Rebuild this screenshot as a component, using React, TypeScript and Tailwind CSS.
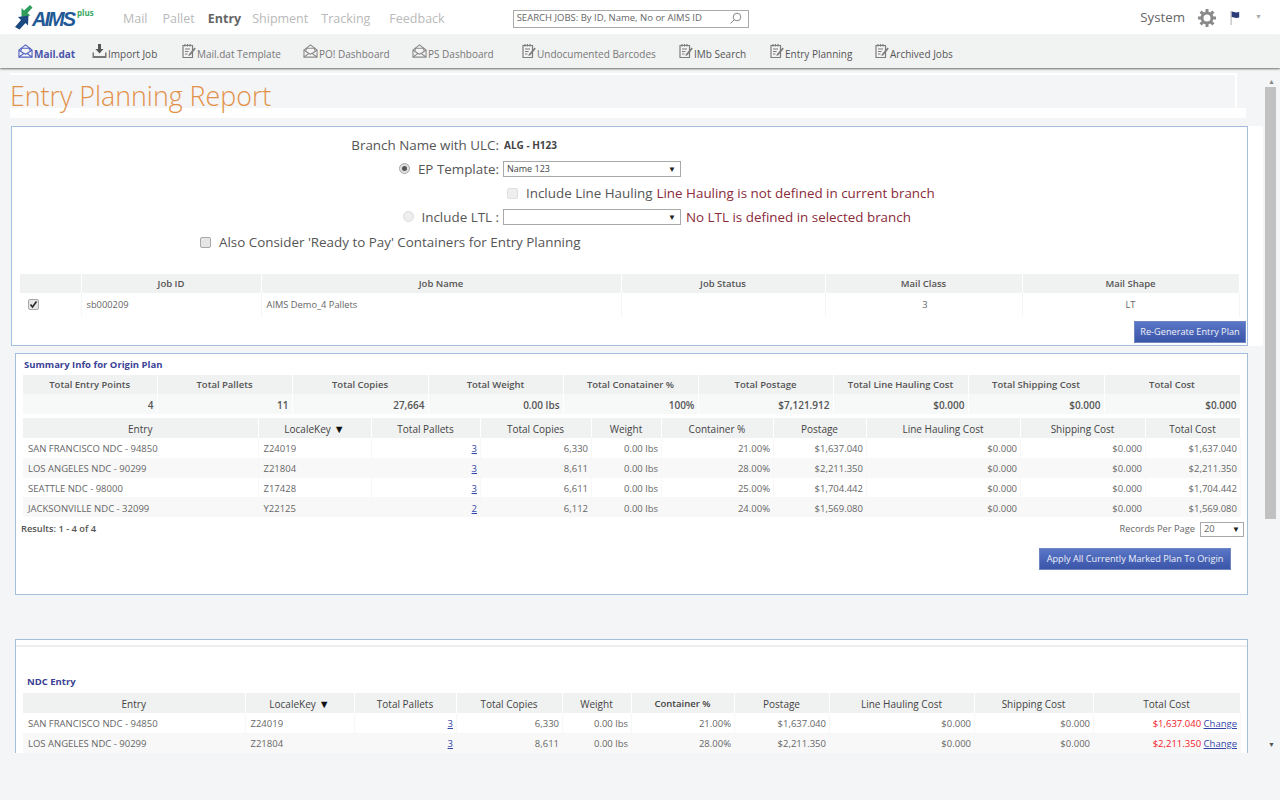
import React from "react";

const sans = "[font-family:'Open_Sans','Liberation_Sans',sans-serif]";

function Envelope({ c = "#8a8a8a" }: { c?: string }) {
  return (
    <svg width="15" height="14" viewBox="0 0 16 15" fill="none" stroke={c} strokeWidth="1.2">
      <path d="M1 6.500 8 1l7 5.500V14H1z" fill="#f6f6f6" />
      <path d="M3.500 7V4.500h9V7M1 6.500l5.500 4M15 6.500l-5.500 4M1 14l5.500-4 1.500 1 1.500-1 5.500 4" />
    </svg>
  );
}
function Note() {
  return (
    <svg width="15" height="16" viewBox="0 0 15 16" fill="none" stroke="#7d7d7d" strokeWidth="1.2">
      <path d="M2 2.500h9.500V14.500H2z" fill="#f3f3f3" />
      <path d="M4 1v2.500M6.500 1v2.500M9 1v2.500M4 6h5M4 8.500h3.500M4 11h2.500" />
      <path d="M13.500 4.500 8 11l-.7 2 2-.8 5.500-6.400z" fill="#7d7d7d" stroke="none" />
    </svg>
  );
}
function Download() {
  return (
    <svg width="15" height="16" viewBox="0 0 15 16" fill="#555">
      <path d="M6 1h3v5h2.500L7.500 10.500 3.500 6H6z" />
      <path d="M.500 9.500H2V13h11V9.500h1.500V15H.500z" fill="#777" />
    </svg>
  );
}

const tabs: { l: string; ml: string; w: string; icon: React.ReactNode; cls: string }[] = [
  { l: "Mail.dat", ml: "ml-[18px]", w: "w-[42px]", icon: <Envelope c="#4f5fc0" />, cls: "font-bold text-[#4a55ad]" },
  { l: "Import Job", ml: "ml-[16px]", w: "w-[51px]", icon: <Download />, cls: "text-[#555]" },
  { l: "Mail.dat Template", ml: "ml-[22px]", w: "w-[84px]", icon: <Note />, cls: "text-[#777]" },
  { l: "PO! Dashboard", ml: "ml-[22px]", w: "w-[71px]", icon: <Envelope />, cls: "text-[#777]" },
  { l: "PS Dashboard", ml: "ml-[22px]", w: "w-[66px]", icon: <Envelope />, cls: "text-[#777]" },
  { l: "Undocumented Barcodes", ml: "ml-[27px]", w: "w-[120px]", icon: <Note />, cls: "text-[#777]" },
  { l: "IMb Search", ml: "ml-[21px]", w: "w-[53px]", icon: <Note />, cls: "text-[#555]" },
  { l: "Entry Planning", ml: "ml-[22px]", w: "w-[68px]", icon: <Note />, cls: "text-[#555]" },
  { l: "Archived Jobs", ml: "ml-[21px]", w: "w-[65px]", icon: <Note />, cls: "text-[#555]" },
];

function Check({ checked = false, light = false }: { checked?: boolean; light?: boolean }) {
  return (
    <span className={`flex h-[11px] w-[11px] shrink-0 items-center justify-center rounded-[2px] border ${light ? "border-[#e0e0e0] bg-[#eeeeee]" : "border-[#a8a8a8] bg-[#e6e6e6]"}`}>
      {checked && (
        <svg width="9" height="9" viewBox="0 0 9 9"><path d="M1.500 4.500 3.500 7 7.500 1.500" fill="none" stroke="#222" strokeWidth="1.500" /></svg>
      )}
    </span>
  );
}
function Radio({ on = false }: { on?: boolean }) {
  return (
    <span className={`flex h-[11px] w-[11px] shrink-0 items-center justify-center rounded-full border ${on ? "border-[#a8a8a8] bg-[#e0e0e0]" : "border-[#dcdcdc] bg-[#eeeeee]"}`}>
      {on && <span className="h-[5px] w-[5px] rounded-full bg-[#555]" />}
    </span>
  );
}
function Select({ text = "" }: { text?: string }) {
  return (
    <div className="flex h-[16px] w-[178px] items-center justify-between border border-[#a9a9a9] bg-white pl-[3px] pr-[4px] text-[9px] text-[#444]">
      <span>{text}</span>
      <span className="text-[8px] text-[#222]">▼</span>
    </div>
  );
}
function Btn({ children, w }: { children: React.ReactNode; w: string }) {
  return (
    <button className={`h-[22px] ${w} whitespace-nowrap border border-[#6f86c4] bg-gradient-to-b from-[#5a76c6] to-[#3b55a8] text-[9.200px] text-[#eef1fb]`}>
      {children}
    </button>
  );
}

const hd = "bg-[#f0f1f1] border-r border-white text-center align-middle p-0";

const jobCols = ["w-[61px]", "w-[180px]", "w-[360px]", "w-[204px]", "w-[197px]", "w-[217px]"];
const sumCols = ["w-[134px]", "w-[135px]", "w-[136px]", "w-[135px]", "w-[135px]", "w-[135px]", "w-[135px]", "w-[136px]", "w-[136px]"];
const originCols = ["w-[235px]", "w-[113px]", "w-[109px]", "w-[111px]", "w-[70px]", "w-[112px]", "w-[93px]", "w-[154px]", "w-[125px]", "w-[95px]"];
const ndcCols = ["w-[222px]", "w-[109px]", "w-[102px]", "w-[106px]", "w-[69px]", "w-[103px]", "w-[95px]", "w-[145px]", "w-[119px]", "w-[147px]"];

function Cols({ c }: { c: string[] }) {
  return (
    <colgroup>
      {c.map((x, i) => (
        <col key={i} className={x} />
      ))}
    </colgroup>
  );
}

const origin = [
  ["SAN FRANCISCO NDC - 94850", "Z24019", "3", "6,330", "0.00 lbs", "21.00%", "$1,637.040", "$0.000", "$0.000", "$1,637.040"],
  ["LOS ANGELES NDC - 90299", "Z21804", "3", "8,611", "0.00 lbs", "28.00%", "$2,211.350", "$0.000", "$0.000", "$2,211.350"],
  ["SEATTLE NDC - 98000", "Z17428", "3", "6,611", "0.00 lbs", "25.00%", "$1,704.442", "$0.000", "$0.000", "$1,704.442"],
  ["JACKSONVILLE NDC - 32099", "Y22125", "2", "6,112", "0.00 lbs", "24.00%", "$1,569.080", "$0.000", "$0.000", "$1,569.080"],
];
const heads = ["Entry", "LocaleKey", "Total Pallets", "Total Copies", "Weight", "Container %", "Postage", "Line Hauling Cost", "Shipping Cost", "Total Cost"];

function DataTable({ cols, rows, ndc = false, rowH }: { cols: string[]; rows: string[][]; ndc?: boolean; rowH: string }) {
  return (
    <table className="w-[1217px] table-fixed border-collapse">
      <Cols c={cols} />
      <thead>
        <tr className="h-[20px] text-[10px] leading-[14px] text-[#444]">
          {heads.map((h, i) => (
            <th key={h} className={`${hd} pt-[1px] ${ndc && i === 5 ? "font-semibold text-[9.500px]" : "font-normal"}`}>
              {h}
              {i === 1 && <span className="ml-[3px] text-[11px] leading-[12px] text-[#111]">▼</span>}
            </th>
          ))}
        </tr>
      </thead>
      <tbody>
        {rows.map((r, ri) => (
          <tr key={ri} className={`${rowH} text-[9.500px] leading-[14px] text-[#666] ${ri % 2 ? "bg-[#f8f8f8]" : "bg-white"}`}>
            {r.map((v, i) => (
              <td key={i} className={`border-r border-[#f7f7f7] p-0 ${ndc ? "pt-[2px]" : "pt-[3px]"} ${i < 2 ? "pl-[5px] text-left" : "pr-[2.500px] text-right"}`}>
                {i === 2 ? (
                  <a className="text-[#3346a8] underline">{v}</a>
                ) : i === 9 && ndc ? (
                  <>
                    <span className="text-[#f0202a]">{v}</span> <a className="text-[#3346a8] underline">Change</a>
                  </>
                ) : (
                  v
                )}
              </td>
            ))}
          </tr>
        ))}
      </tbody>
    </table>
  );
}

export default function App() {
  return (
    <div className={`flex h-[800px] w-[1280px] flex-col overflow-hidden bg-[#f4f5f7] ${sans}`}>
      {/* top bar */}
      <header className="flex h-[35px] shrink-0 items-center bg-white">
        <div className="ml-[14px] flex w-[109px] items-start">
          <svg width="19" height="27" viewBox="0 0 19 27" className="-mr-[1px] mt-[-1px]">
            <path d="M16 1l2.500 2.500-5 5.500 3 2.500-9 1.500 0-9 2.500 2.500z" fill="#2e9c5a" />
            <path d="M1 23l6-7-3-3 10.500-1.500-.5 10-2.500-2.500-6 6.500z" fill="#1c4a80" />
          </svg>
          <span className="mt-[2px] text-[20px] font-bold italic leading-[24px] tracking-[-2px] text-[#1f5a96] [font-family:'Liberation_Sans',sans-serif]">AIMS</span>
          <span className="ml-[3px] mt-[1px] text-[8px] font-bold leading-[14px] text-[#39a85f]">plus</span>
        </div>
        <nav className="mt-[4px] flex text-[12.500px] text-[#b9b9b9]">
          <span>Mail</span>
          <span className="ml-[15px]">Pallet</span>
          <span className="ml-[13px] font-bold text-[#666]">Entry</span>
          <span className="ml-[11px]">Shipment</span>
          <span className="ml-[13px]">Tracking</span>
          <span className="ml-[19px]">Feedback</span>
        </nav>
        <div className="ml-[68px] mt-[2px] flex h-[18px] w-[236px] items-center justify-between border border-[#aaaaaa] pl-[3px] pr-[6px] text-[9.500px] text-[#666]">
          <span>SEARCH JOBS: By ID, Name, No or AIMS ID</span>
          <svg width="13" height="13" viewBox="0 0 13 13" fill="none" stroke="#888" strokeWidth="1">
            <circle cx="8" cy="5" r="3.800" />
            <path d="M5.200 7.800 1.500 11.500" />
          </svg>
        </div>
        <span className="ml-auto text-[13.300px] text-[#666]">System</span>
        <svg width="18" height="18" viewBox="0 0 18 18" className="ml-[13px]" fill="none" stroke="#8a8a8a">
          <circle cx="9" cy="9" r="5" strokeWidth="3" />
          <path d="M9 0v4M9 14v4M0 9h4M14 9h4M2.600 2.600l2.800 2.800M12.600 12.600l2.800 2.800M2.600 15.400l2.800-2.800M12.600 5.400l2.800-2.800" strokeWidth="3" />
        </svg>
        <svg width="12" height="15" viewBox="0 0 12 15" className="ml-[13px]">
          <path d="M1.500 1h1.200v14H1.500z" fill="#bbb" />
          <path d="M2.700 1.500c2 0 3 1 4.500 1 1 0 2-.3 3-.5v5.500c-1 .3-2 .5-3 .5-1.500 0-2.500-1-4.500-1z" fill="#2c3a78" />
        </svg>
        <span className="ml-[14px] mr-[18px] text-[7px] text-[#aaa]">▼</span>
      </header>

      {/* toolbar */}
      <div className="relative flex h-[33px] shrink-0 items-center bg-[#f1f2f2] shadow-[0_1px_2px_rgba(60,60,60,0.75)]">
        {tabs.map((t) => (
          <div key={t.l} className={`flex items-center ${t.ml}`}>
            <span className="-mt-[1px] flex w-[16px]">{t.icon}</span>
            <span className={`mt-[5px] whitespace-nowrap text-[10px] ${t.w} ${t.cls}`}>{t.l}</span>
          </div>
        ))}
      </div>

      {/* scrolling page */}
      <div className="flex h-[685px] shrink-0 overflow-hidden">
        <main className="w-[1263px] shrink-0 overflow-hidden">
          <div className="ml-[10px] mt-[5px] h-[35px] w-[1227px] border-r-2 border-t-2 border-white">
            <h1 className="text-[26.800px] font-light leading-[42px] text-[#e2914a]">Entry Planning Report</h1>
          </div>
          <div className="ml-[10px] h-[10px] w-[1236px] bg-white" />
          <div className="h-[8px]" />

          <div className="ml-[11px] w-[1252px] bg-white">
            <section className="h-[220px] w-[1237px] border border-[#a3bfdc] bg-white pt-[6px] text-[13.400px] text-[#555]">
              <div className="flex h-[24px] items-center">
                <span className="w-[487px] text-right">Branch Name with ULC:</span>
                <span className="ml-[5px] text-[10px] font-bold text-[#444]">ALG - H123</span>
              </div>
              <div className="flex h-[24px] items-center">
                <span className="flex w-[487px] items-center justify-end">
                  <Radio on />
                  <span className="ml-[8px]">EP Template:</span>
                </span>
                <span className="ml-[4px]"><Select text="Name 123" /></span>
              </div>
              <div className="flex h-[24px] items-center pl-[495px]">
                <Check light />
                <span className="ml-[8px]">Include Line Hauling</span>
                <span className="ml-[4px] text-[#8a2a3a]">Line Hauling is not defined in current branch</span>
              </div>
              <div className="flex h-[24px] items-center">
                <span className="flex w-[487px] items-center justify-end">
                  <Radio />
                  <span className="ml-[8px]">Include LTL :</span>
                </span>
                <span className="ml-[4px]"><Select /></span>
                <span className="ml-[5px] text-[#8a2a3a]">No LTL is defined in selected branch</span>
              </div>
              <div className="mt-[1px] flex h-[24px] items-center pl-[188px]">
                <Check />
                <span className="ml-[8px]">Also Consider 'Ready to Pay' Containers for Entry Planning</span>
              </div>

              <table className="ml-[8px] mt-[20px] w-[1219px] table-fixed border-collapse">
                <Cols c={jobCols} />
                <thead>
                  <tr className="h-[19px] text-[9.500px] leading-[14px] text-[#555]">
                    {["", "Job ID", "Job Name", "Job Status", "Mail Class", "Mail Shape"].map((h, i) => (
                      <th key={i} className={`${hd} pt-[1px] font-semibold`}>{h}</th>
                    ))}
                  </tr>
                </thead>
                <tbody>
                  <tr className="h-[24px] text-[9.300px] text-[#666]">
                    <td className="border-r border-[#f5f5f5] pb-[2px] pl-[8px]"><Check checked /></td>
                    <td className="border-r border-[#f5f5f5] pl-[5px]">sb000209</td>
                    <td className="border-r border-[#f5f5f5] pl-[5px]">AIMS Demo_4 Pallets</td>
                    <td className="border-r border-[#f5f5f5]"></td>
                    <td className="border-r border-[#f5f5f5] pl-[3px] text-center">3</td>
                    <td className="border-r border-[#f5f5f5] text-center">LT</td>
                  </tr>
                </tbody>
              </table>
              <div className="mt-[4px] flex justify-end pr-[1px]">
                <Btn w="w-[112px]">Re-Generate Entry Plan</Btn>
              </div>
            </section>
          </div>

          <section className="ml-[15px] mt-[7px] h-[242px] w-[1233px] border border-[#a3bfdc] bg-white pl-[7px]">
            <h2 className="ml-[1px] mt-[3px] h-[18px] text-[9.500px] font-bold leading-[16px] text-[#3a3f95]">Summary Info for Origin Plan</h2>
            <table className="w-[1217px] table-fixed border-collapse">
              <Cols c={sumCols} />
              <thead>
                <tr className="h-[19px] text-[9.500px] leading-[14px] text-[#555]">
                  {["Total Entry Points", "Total Pallets", "Total Copies", "Total Weight", "Total Conatainer %", "Total Postage", "Total Line Hauling Cost", "Total Shipping Cost", "Total Cost"].map((h) => (
                    <th key={h} className={`${hd} pt-[1px] font-semibold`}>{h}</th>
                  ))}
                </tr>
              </thead>
              <tbody>
                <tr className="h-[20px] text-[10px] font-semibold leading-[14px] text-[#555]">
                  {["4", "11", "27,664", "0.00 lbs", "100%", "$7,121.912", "$0.000", "$0.000", "$0.000"].map((v, i) => (
                    <td key={i} className="border-r border-white bg-[#f7f8f8] p-0 pr-[3px] pt-[1px] text-right">{v}</td>
                  ))}
                </tr>
              </tbody>
            </table>
            <div className="mt-[4px]">
              <DataTable cols={originCols} rows={origin} rowH="h-[19.750px]" />
            </div>
            <div className="-ml-[2px] mt-[4px] flex h-[16px] w-[1223px] items-center justify-between text-[9.300px]">
              <span className="font-semibold text-[#555]">Results: 1 - 4 of 4</span>
              <span className="flex items-center text-[#666]">
                Records Per Page
                <span className="ml-[5px] flex h-[15px] w-[44px] items-center justify-between border border-[#a9a9a9] pl-[3px] pr-[3px]">
                  20<span className="text-[8px] text-[#222]">▼</span>
                </span>
              </span>
            </div>
            <div className="mt-[11px] flex w-[1208px] justify-end">
              <Btn w="w-[192px]">Apply All Currently Marked Plan To Origin</Btn>
            </div>
          </section>

          <section className="ml-[15px] mt-[44px] h-[140px] w-[1233px] border border-[#a3bfdc] bg-white pl-[7px]">
            <div className="-ml-[7px] mt-[5px] h-[2px] bg-[#eeeeee]" />
            <h2 className="ml-[4px] mt-[27px] h-[19px] text-[9.500px] font-bold leading-[16px] text-[#3a3f95]">NDC Entry</h2>
            <DataTable cols={ndcCols} rows={origin.slice(0, 2)} ndc rowH="h-[20px]" />
          </section>
        </main>

        {/* scrollbar */}
        <div className="flex w-[17px] shrink-0 flex-col items-center bg-[#f4f5f7] pt-[8px]">
          <span className="flex h-[11px] items-center text-[7px] leading-none text-[#888]">▲</span>
          <div className="-ml-[2px] h-[432px] w-[11px] bg-[#c1c1c1]" />
          <span className="mt-[221px] flex h-[9px] items-center text-[7px] leading-none text-[#555]">▼</span>
        </div>
      </div>
    </div>
  );
}
